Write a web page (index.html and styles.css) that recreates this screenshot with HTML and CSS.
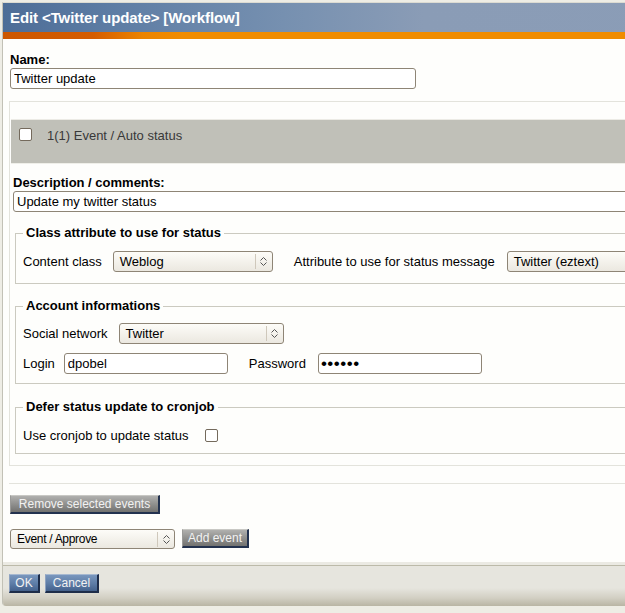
FILE: index.html
```html
<!DOCTYPE html>
<html lang="en">
<head>
<meta charset="utf-8">
<title>Edit &lt;Twitter update&gt; [Workflow]</title>
<link rel="stylesheet" href="styles.css">
</head>
<body>
<div class="window">
  <div class="titlebar"><h1>Edit &lt;Twitter update&gt; [Workflow]</h1></div>
  <div class="accent"></div>
  <div class="content">
    <div class="name-field">
      <label class="label" for="name">Name:</label>
      <input id="name" class="text name-input" type="text" value="Twitter update">
    </div>

    <div class="events">
      <div class="event-head">
        <input class="check" type="checkbox">
        <span class="event-title">1(1) Event / Auto status</span>
      </div>
      <div class="event-body">
        <label class="label desc-label" for="desc">Description / comments:</label>
        <input id="desc" class="text desc-input" type="text" value="Update my twitter status">

        <fieldset class="fs fs-class">
          <legend>Class attribute to use for status</legend>
          <div class="row">
            <span class="lbl">Content class</span>
            <div class="select sel-class"><span class="sel-text">Weblog</span><span class="arrow"><svg width="7" height="11" viewBox="0 0 7 11"><path d="M0.5 4.5 L3.5 1.5 L6.5 4.5 M0.5 6.5 L3.5 9.5 L6.5 6.5" fill="none" stroke="#555" stroke-width="1"/></svg></span></div>
            <span class="lbl gap">Attribute to use for status message</span>
            <div class="select sel-attr"><span class="sel-text">Twitter (eztext)</span></div>
          </div>
        </fieldset>

        <fieldset class="fs fs-account">
          <legend>Account informations</legend>
          <div class="row">
            <span class="lbl">Social network</span>
            <div class="select sel-network"><span class="sel-text">Twitter</span><span class="arrow"><svg width="7" height="11" viewBox="0 0 7 11"><path d="M0.5 4.5 L3.5 1.5 L6.5 4.5 M0.5 6.5 L3.5 9.5 L6.5 6.5" fill="none" stroke="#555" stroke-width="1"/></svg></span></div>
          </div>
          <div class="row row2">
            <span class="lbl lbl-login">Login</span>
            <input class="text small-input" type="text" value="dpobel">
            <span class="lbl gap">Password</span>
            <input class="text small-input pass-input" type="password" value="secret">
          </div>
        </fieldset>

        <fieldset class="fs fs-cron">
          <legend>Defer status update to cronjob</legend>
          <div class="row">
            <span class="lbl">Use cronjob to update status</span>
            <input class="check cron-check" type="checkbox">
          </div>
        </fieldset>
      </div>
    </div>

    <div class="rule"></div>

    <button class="btn btn-grey btn-remove" type="button">Remove selected events</button>

    <div class="add-row">
      <div class="select sel-event"><span class="sel-text">Event / Approve</span><span class="arrow"><svg width="7" height="11" viewBox="0 0 7 11"><path d="M0.5 4.5 L3.5 1.5 L6.5 4.5 M0.5 6.5 L3.5 9.5 L6.5 6.5" fill="none" stroke="#555" stroke-width="1"/></svg></span></div>
      <button class="btn btn-grey btn-add" type="button">Add event</button>
    </div>
  </div>
  <div class="footer">
    <div class="footer-bar">
      <button class="btn btn-blue btn-ok" type="button">OK</button>
      <button class="btn btn-blue btn-cancel" type="button">Cancel</button>
    </div>
  </div>
</div>
</body>
</html>
```
FILE: styles.css
```css
html, body {
  margin: 0;
  padding: 0;
  overflow: hidden;
  background: #eeede5;
  font-family: "Liberation Sans", Arial, sans-serif;
  font-size: 13px;
  color: #000;
}

.window {
  width: 780px;
  margin: 2px 0 0 2px;
  border-top: 1px solid #dcdbd2;
  border-left: 1px solid #c2c1b6;
  border-bottom-left-radius: 4px;
  overflow: hidden;
}

.titlebar {
  height: 29px;
  padding-left: 7px;
  display: flex;
  align-items: center;
  background: linear-gradient(90deg, #4d6d97 0px, #5f7ea5 120px, #7690b0 280px, #8a9cb6 420px, #8b9db7 780px);
}

.titlebar h1 {
  margin: 0;
  font: bold 15px "Liberation Sans", Arial, sans-serif;
  color: #fff;
  white-space: nowrap;
  letter-spacing: -0.1px;
}

.accent {
  height: 7px;
  background: linear-gradient(90deg, #cc5600 0px, #d45c00 90px, #ec8400 140px, #f08c00 180px, #f08c00 780px);
}

.content {
  background: #fefefc;
  padding: 13px 0 13px 6px;
}

.label {
  display: block;
  font-weight: bold;
  line-height: 16px;
}

.name-field {
  padding-left: 1px;
}

.text {
  box-sizing: border-box;
  height: 21px;
  margin: 0;
  padding: 0 3px;
  border: 1px solid #8e8576;
  border-radius: 3px;
  background: #fff;
  font: 13px "Liberation Sans", Arial, sans-serif;
  color: #000;
  outline: none;
}

.name-input {
  display: block;
  width: 406px;
}

.events {
  margin-top: 12px;
  border-top: 1px solid #e3e3dc;
  border-left: 1px solid #e3e3dc;
  border-bottom: 1px solid #e3e3dc;
  padding: 17px 0 11px 0;
}

.event-head {
  margin-left: 1px;
  height: 35px;
  border-top: 1px solid #ecebe5;
  border-bottom: 1px solid #efefe9;
  background: #c0c0b8;
  padding: 8px 0 0 8px;
  display: flex;
  align-items: flex-start;
}

.check {
  appearance: none;
  -webkit-appearance: none;
  box-sizing: border-box;
  width: 13px;
  height: 13px;
  margin: 0;
  border: 1px solid #746a5c;
  border-radius: 2px;
  background: #fff;
  flex: none;
}

.event-title {
  margin-left: 15px;
  line-height: 16px;
  color: #383838;
}

.event-body {
  padding-left: 3px;
}

.desc-label {
  margin-top: 11px;
}

.desc-input {
  display: block;
  width: 760px;
}

.fs {
  margin: 13px 0 0 2px;
  padding: 0 7px 11px 7px;
  border: 1px solid #cbcac0;
  min-width: 0;
}

.fs legend {
  padding: 0 3px;
  font-weight: bold;
  line-height: 16px;
}

.fs-account {
  margin-top: 14px;
  padding-bottom: 9px;
}

.fs-cron {
  margin-top: 15px;
  padding-bottom: 7px;
}

.row {
  display: flex;
  align-items: center;
  height: 21px;
  margin-top: 10px;
  white-space: nowrap;
}

.fs-account .row {
  margin-top: 9px;
}

.lbl {
  margin-right: 11px;
}

.lbl-login {
  margin-right: 9px;
}

.lbl.gap {
  margin-left: 21px;
  margin-right: 12px;
}

.select {
  box-sizing: border-box;
  height: 21px;
  display: flex;
  align-items: center;
  border: 1px solid #8e8576;
  border-radius: 3px;
  background: linear-gradient(#fdfcf8, #ebe8e0);
  flex: none;
}

.sel-text {
  flex: 1;
  padding-left: 6px;
  white-space: nowrap;
}

.arrow {
  width: 16px;
  height: 15px;
  border-left: 1px solid #cfc8bb;
  display: flex;
  align-items: center;
  justify-content: center;
}

.sel-class {
  width: 160px;
}

.sel-attr {
  width: 200px;
}

.sel-network {
  width: 165px;
}

.small-input {
  width: 164px;
}

.pass-input {
  font-size: 17px;
  letter-spacing: 0.5px;
  padding-left: 2px;
}

.cron-check {
  margin-left: 5px;
}

.rule {
  margin-top: 17px;
  height: 1px;
  background: #e3e3dc;
}

.btn {
  box-sizing: border-box;
  height: 19px;
  margin: 0;
  padding: 0 2px;
  font: 12px "Liberation Sans", Arial, sans-serif;
  color: #f2f2f2;
  line-height: 16px;
  white-space: nowrap;
  cursor: pointer;
  border-style: solid;
  border-width: 1px 2px 2px 1px;
}

.btn-grey {
  background: linear-gradient(#b0b0ae, #8a8a88 60%, #727270);
  border-color: #c8c8c4 #23324f #23324f #9a9a98;
}

.btn-blue {
  background: linear-gradient(#7896bd, #5d7ca6 55%, #44618c);
  border-color: #a6b8d0 #1e2d4a #1e2d4a #8ea2c0;
}

.btn-remove {
  display: block;
  margin: 11px 0 0 1px;
  width: 150px;
}

.add-row {
  display: flex;
  align-items: flex-start;
  margin-top: 15px;
  padding-left: 1px;
}

.sel-event {
  width: 165px;
  height: 20px;
  font-size: 12px;
  letter-spacing: -0.3px;
}

.btn-add {
  margin-left: 7px;
  width: 67px;
}

.footer {
  border-top: 3px solid #ebeae3;
}

.footer-bar {
  height: 41px;
  box-sizing: border-box;
  border-top: 1px solid #bcbaa9;
  padding: 8px 0 0 6px;
  display: flex;
  align-items: flex-start;
  gap: 5px;
  background: linear-gradient(#e6e5de 0px, #e6e5de 22px, #d2cfc3 32px, #b9b5a4 40px);
}

.btn-ok {
  width: 31px;
}

.btn-cancel {
  width: 54px;
}
```
